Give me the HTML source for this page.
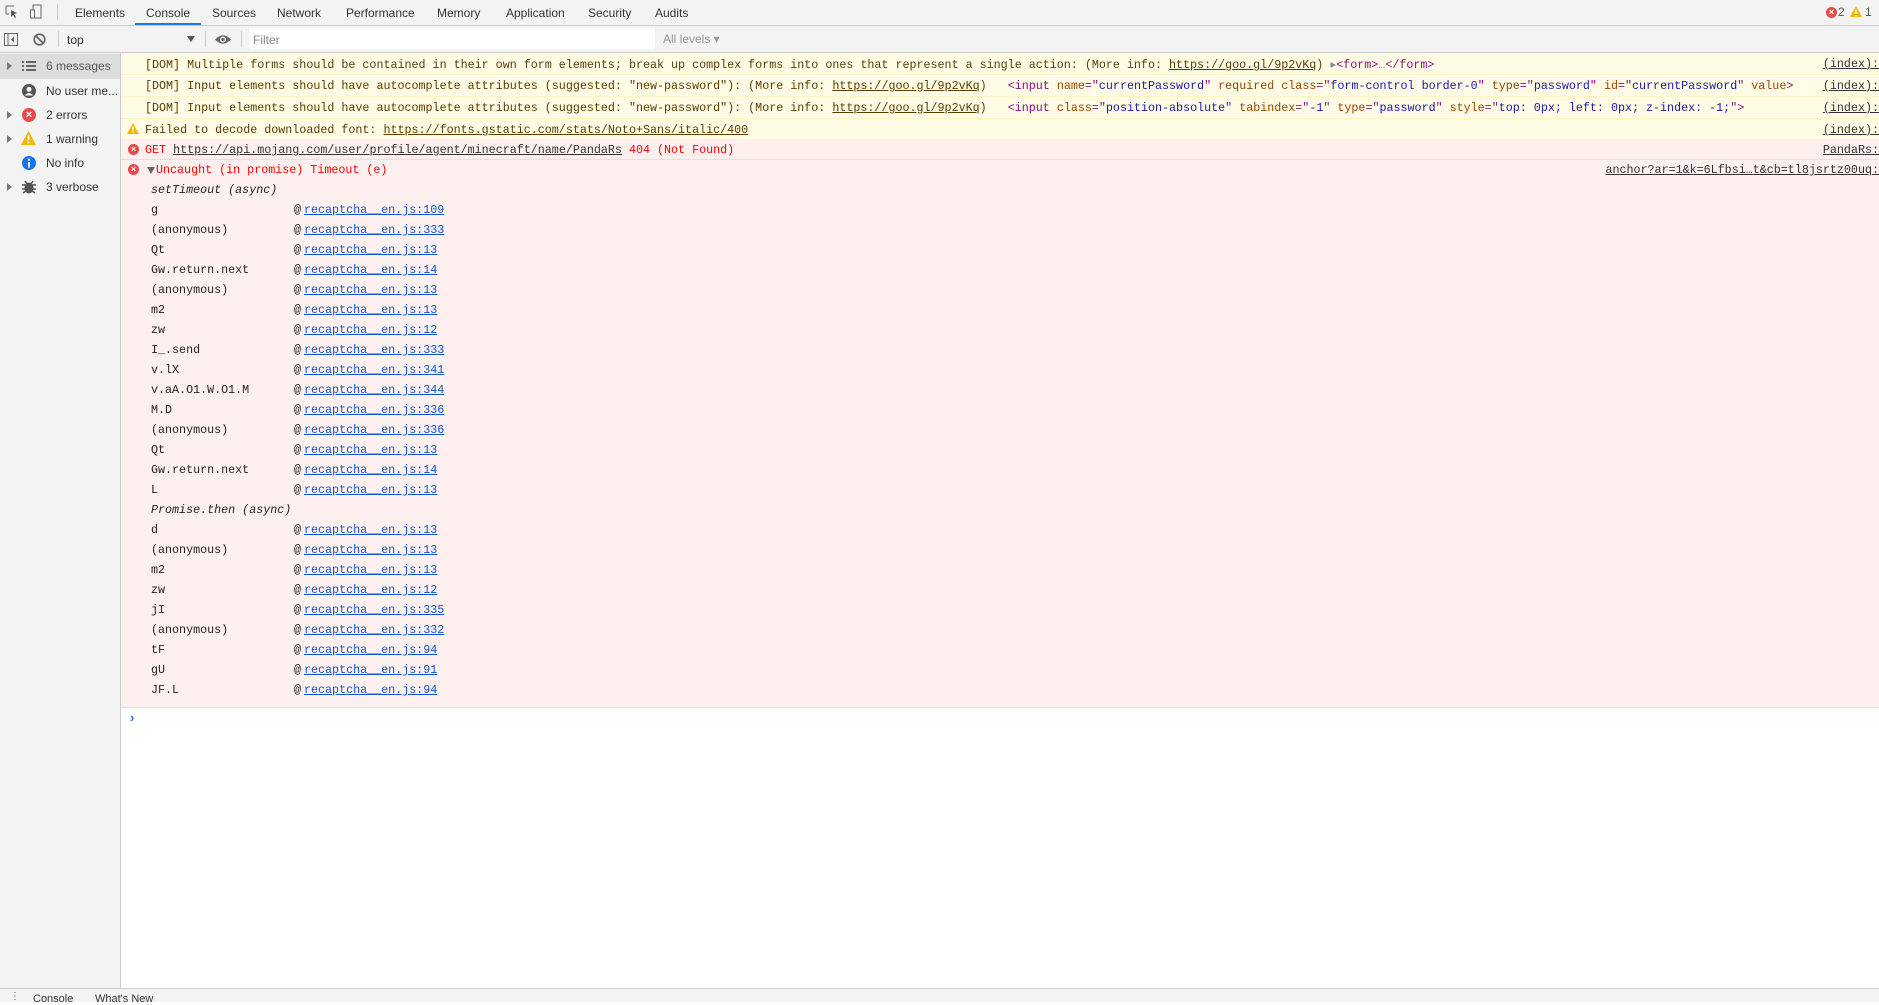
<!DOCTYPE html>
<html><head><meta charset="utf-8"><style>
*{margin:0;padding:0;box-sizing:border-box}
body{width:1879px;height:1002px;overflow:hidden;background:#fff;font-family:"Liberation Sans",sans-serif;position:relative}
.abs{position:absolute}
.mono{font-family:"Liberation Mono",monospace;font-size:11.7px;white-space:pre}
#tabs{left:0;top:0;width:1879px;height:26px;background:#f3f3f3;border-bottom:1px solid #ccc}
.tab{position:absolute;top:6px;font-size:12px;color:#333}
#tb{left:0;top:26px;width:1879px;height:27px;background:#f3f3f3;border-bottom:1px solid #ccc}
#side{left:0;top:53px;width:121px;height:935px;background:#f3f3f3;border-right:1px solid #ccc}
.si{position:absolute;left:0;width:120px;height:24px;font-size:12px;color:#333}
.si span.t{position:absolute;left:46px;top:5px;white-space:nowrap}
.tri{position:absolute;left:7px;top:8px;width:0;height:0;border-left:5px solid #777;border-top:4px solid transparent;border-bottom:4px solid transparent}
.row{position:absolute;left:121px;width:1758px}
.w{background:#fffbe5;border-bottom:1px solid #fff5c2;color:#5c3c00}
.e{background:#fff0f0;border-bottom:1px solid #ffd6d6;color:#f00}
.u{text-decoration:underline}
.src{position:absolute;right:0;color:#333;text-decoration:underline}
.tg{color:#881280}.an{color:#994500}.av{color:#1a1aa6}.gr{color:#888}
.st{position:absolute;left:151px;color:#222}
.at{position:absolute;left:294px;color:#222}
.lk{position:absolute;left:304px;color:#15c;text-decoration:underline}
#bot{left:0;top:988px;width:1879px;height:14px;background:#f3f3f3;border-top:1px solid #ccc}
.eicon{position:absolute;width:11px;height:11px;border-radius:50%;background:#e64b4b;color:#fff;font-size:9px;line-height:11px;text-align:center;font-family:"Liberation Sans",sans-serif;font-weight:bold}
</style></head><body>
<div id="tabs" class="abs">
<svg class="abs" style="left:5px;top:5px" width="14" height="14" viewBox="0 0 14 14"><path d="M1 1h8M1 1v8M1 9h3" stroke="#666" fill="none"/><path d="M6 5l6 3-3 1 2 3-1 1-2-3-2 2z" fill="#555"/></svg>
<svg class="abs" style="left:30px;top:4px" width="12" height="16" viewBox="0 0 12 16"><rect x="3" y="1" width="8" height="13" fill="none" stroke="#666"/><rect x="0.5" y="6" width="4" height="8" fill="#f3f3f3" stroke="#666"/></svg>
<div class="abs" style="left:57px;top:4px;width:1px;height:16px;background:#ccc"></div>
<span class="tab" style="left:75px">Elements</span>
<span class="tab" style="left:146px;color:#333">Console</span>
<div class="abs" style="left:135px;top:23px;width:66px;height:2px;background:#1a73e8"></div>
<span class="tab" style="left:212px">Sources</span>
<span class="tab" style="left:277px">Network</span>
<span class="tab" style="left:346px">Performance</span>
<span class="tab" style="left:437px">Memory</span>
<span class="tab" style="left:506px">Application</span>
<span class="tab" style="left:588px">Security</span>
<span class="tab" style="left:655px">Audits</span>
<span class="eicon" style="left:1826px;top:7px">×</span>
<span class="abs" style="left:1838px;top:5px;font-size:12px;color:#555">2</span>
<svg class="abs" style="left:1850px;top:6px" width="12" height="12"><path d="M6 0L12 11H0z" fill="#f4b400"/><rect x="5.3" y="3.5" width="1.4" height="4.5" fill="#fff"/><rect x="5.3" y="9" width="1.4" height="1.3" fill="#fff"/></svg>
<span class="abs" style="left:1865px;top:5px;font-size:12px;color:#555">1</span>
</div>
<div id="tb" class="abs">
<svg class="abs" style="left:4px;top:7px" width="14" height="13"><rect x="0.5" y="0.5" width="13" height="12" fill="none" stroke="#666"/><path d="M4 1v11" stroke="#666"/><path d="M10 3.5L7 6.5l3 3z" fill="#666"/></svg>
<svg class="abs" style="left:33px;top:7px" width="13" height="13"><circle cx="6.5" cy="6.5" r="5.3" fill="none" stroke="#666" stroke-width="1.7"/><path d="M3 3l7 7" stroke="#666" stroke-width="1.7"/></svg>
<div class="abs" style="left:58px;top:5px;width:1px;height:16px;background:#ccc"></div>
<span class="abs" style="left:67px;top:7px;font-size:12px;color:#333">top</span>
<svg class="abs" style="left:187px;top:10px" width="8" height="6"><path d="M0 0h8L4 6z" fill="#555"/></svg>
<div class="abs" style="left:205px;top:5px;width:1px;height:16px;background:#ccc"></div>
<svg class="abs" style="left:215px;top:8px" width="16" height="11"><path d="M0 5.5Q8 -3 16 5.5Q8 14 0 5.5z" fill="#666"/><circle cx="8" cy="5.5" r="3" fill="#f3f3f3"/><circle cx="8" cy="5.5" r="1.6" fill="#666"/></svg>
<div class="abs" style="left:241px;top:5px;width:1px;height:16px;background:#ccc"></div>
<div class="abs" style="left:249px;top:3px;width:406px;height:20px;background:#fff"></div>
<span class="abs" style="left:253px;top:7px;font-size:12px;color:#888">Filter</span>
<span class="abs" style="left:663px;top:6px;font-size:12px;color:#999">All levels ▾</span>
</div>
<div id="side" class="abs">
<div class="si" style="top:1px;background:#ddd;height:25px"><div class="tri"></div>
<svg class="abs" style="left:22px;top:7px" width="14" height="10"><g fill="#666"><rect x="0" y="0" width="2" height="2"/><rect x="4" y="0" width="10" height="2"/><rect x="0" y="4" width="2" height="2"/><rect x="4" y="4" width="10" height="2"/><rect x="0" y="8" width="2" height="2"/><rect x="4" y="8" width="10" height="2"/></g></svg>
<span class="t" style="color:#555">6 messages</span></div>
<div class="si" style="top:26px"><svg class="abs" style="left:22px;top:5px" width="14" height="14"><circle cx="7" cy="7" r="7" fill="#555"/><circle cx="7" cy="5.3" r="2.5" fill="#f3f3f3"/><path d="M2.8 11.5Q7 6.5 11.2 11.5" fill="#f3f3f3"/></svg><span class="t">No user me...</span></div>
<div class="si" style="top:50px"><div class="tri"></div><span class="eicon" style="left:22px;top:5px;width:14px;height:14px;line-height:14px;font-size:11px">×</span><span class="t">2 errors</span></div>
<div class="si" style="top:74px"><div class="tri"></div><svg class="abs" style="left:21px;top:4px" width="15" height="14"><path d="M7.5 0L15 14H0z" fill="#f4b400"/><rect x="6.7" y="4.5" width="1.6" height="5" fill="#fff"/><rect x="6.7" y="10.7" width="1.6" height="1.6" fill="#fff"/></svg><span class="t">1 warning</span></div>
<div class="si" style="top:98px"><svg class="abs" style="left:22px;top:5px" width="14" height="14"><circle cx="7" cy="7" r="7" fill="#1a73e8"/><rect x="6" y="6" width="2" height="5.5" fill="#fff"/><rect x="6" y="2.7" width="2" height="2" fill="#fff"/></svg><span class="t">No info</span></div>
<div class="si" style="top:122px"><div class="tri"></div><svg class="abs" style="left:22px;top:5px" width="14" height="14"><ellipse cx="7" cy="8" rx="4.5" ry="5.5" fill="#555"/><path d="M0 5h14M0 9h14M1 13l3-2M13 13l-3-2M3 1l2 3M11 1l-2 3" stroke="#555" stroke-width="1.5"/></svg><span class="t">3 verbose</span></div>
</div>

<div class="row w mono" style="top:53px;height:22px"><span class="abs" style="left:24px;top:4px">[DOM] Multiple forms should be contained in their own form elements; break up complex forms into ones that represent a single action: (More info: <span class="u">https://goo.gl/9p2vKq</span>) <span class="gr">▸</span><span class="tg">&lt;form&gt;</span><span class="gr">…</span><span class="tg">&lt;/form&gt;</span></span><span class="src" style="top:4px">(index):</span></div>
<div class="row w mono" style="top:75px;height:22px"><span class="abs" style="left:24px;top:4px">[DOM] Input elements should have autocomplete attributes (suggested: "new-password"): (More info: <span class="u">https://goo.gl/9p2vKq</span>)   <span class="tg">&lt;input</span> <span class="an">name</span><span class="tg">="</span><span class="av">currentPassword</span><span class="tg">"</span> <span class="an">required</span> <span class="an">class</span><span class="tg">="</span><span class="av">form-control border-0</span><span class="tg">"</span> <span class="an">type</span><span class="tg">="</span><span class="av">password</span><span class="tg">"</span> <span class="an">id</span><span class="tg">="</span><span class="av">currentPassword</span><span class="tg">"</span> <span class="an">value</span><span class="tg">&gt;</span></span><span class="src" style="top:4px">(index):</span></div>
<div class="row w mono" style="top:97px;height:22px"><span class="abs" style="left:24px;top:4px">[DOM] Input elements should have autocomplete attributes (suggested: "new-password"): (More info: <span class="u">https://goo.gl/9p2vKq</span>)   <span class="tg">&lt;input</span> <span class="an">class</span><span class="tg">="</span><span class="av">position-absolute</span><span class="tg">"</span> <span class="an">tabindex</span><span class="tg">="</span><span class="av">-1</span><span class="tg">"</span> <span class="an">type</span><span class="tg">="</span><span class="av">password</span><span class="tg">"</span> <span class="an">style</span><span class="tg">="</span><span class="av">top: 0px; left: 0px; z-index: -1;</span><span class="tg">"&gt;</span></span><span class="src" style="top:4px">(index):</span></div>
<div class="row w mono" style="top:119px;height:21px"><svg class="abs" style="left:6px;top:4px" width="12" height="11"><path d="M6 0L12 11H0z" fill="#f4b400"/><rect x="5.3" y="3.5" width="1.4" height="4" fill="#fff"/><rect x="5.3" y="8.3" width="1.4" height="1.3" fill="#fff"/></svg><span class="abs" style="left:24px;top:4px">Failed to decode downloaded font: <span class="u">https://fonts.gstatic.com/stats/Noto+Sans/italic/400</span></span><span class="src" style="top:4px">(index):</span></div>
<div class="row e mono" style="top:140px;height:20px"><span class="eicon" style="left:7px;top:4px">×</span><span class="abs" style="left:24px;top:3px">GET <span class="u" style="color:#333">https://api.mojang.com/user/profile/agent/minecraft/name/PandaRs</span> 404 (Not Found)</span><span class="src" style="top:3px">PandaRs:</span></div>
<div class="row e mono" style="top:160px;height:548px;border-bottom:1px solid #ffd6d6"><span class="eicon" style="left:7px;top:4px">×</span><svg class="abs" style="left:26px;top:7px" width="8" height="7"><path d="M0 0h8L4 7z" fill="#666"/></svg><span class="abs" style="left:35px;top:3px">Uncaught (in promise) Timeout (e)</span><span class="src" style="top:3px">anchor?ar=1&amp;k=6Lfbsi…t&amp;cb=tl8jsrtz00uq:</span></div>

<div class="mono" id="stack"></div>
<div class="abs" style="left:130px;top:710px;color:#1a73e8;font-size:13px;font-weight:bold">›</div>
<div id="bot" class="abs"><span class="abs" style="left:10px;top:2px;font-size:10px;color:#555">⋮</span><span class="abs" style="left:33px;top:4px;font-size:11px;color:#333">Console</span><span class="abs" style="left:95px;top:4px;font-size:11px;color:#333">What's New</span></div>
<script>
var items=[["i","setTimeout (async)"],["g","109"],["(anonymous)","333"],["Qt","13"],["Gw.return.next","14"],["(anonymous)","13"],["m2","13"],["zw","12"],["I_.send","333"],["v.lX","341"],["v.aA.O1.W.O1.M","344"],["M.D","336"],["(anonymous)","336"],["Qt","13"],["Gw.return.next","14"],["L","13"],["i","Promise.then (async)"],["d","13"],["(anonymous)","13"],["m2","13"],["zw","12"],["jI","335"],["(anonymous)","332"],["tF","94"],["gU","91"],["JF.L","94"]];
var h="";for(var k=0;k<items.length;k++){var y=183+k*20;var it=items[k];
if(it[0]=="i"){h+='<span class="abs mono st" style="top:'+y+'px;font-style:italic">'+it[1]+'</span>';}
else{h+='<span class="abs mono st" style="top:'+y+'px">'+it[0]+'</span><span class="abs mono at" style="top:'+y+'px">@</span><span class="abs mono lk" style="top:'+y+'px">recaptcha__en.js:'+it[1]+'</span>';}}
document.getElementById("stack").innerHTML=h;
</script>
</body></html>
